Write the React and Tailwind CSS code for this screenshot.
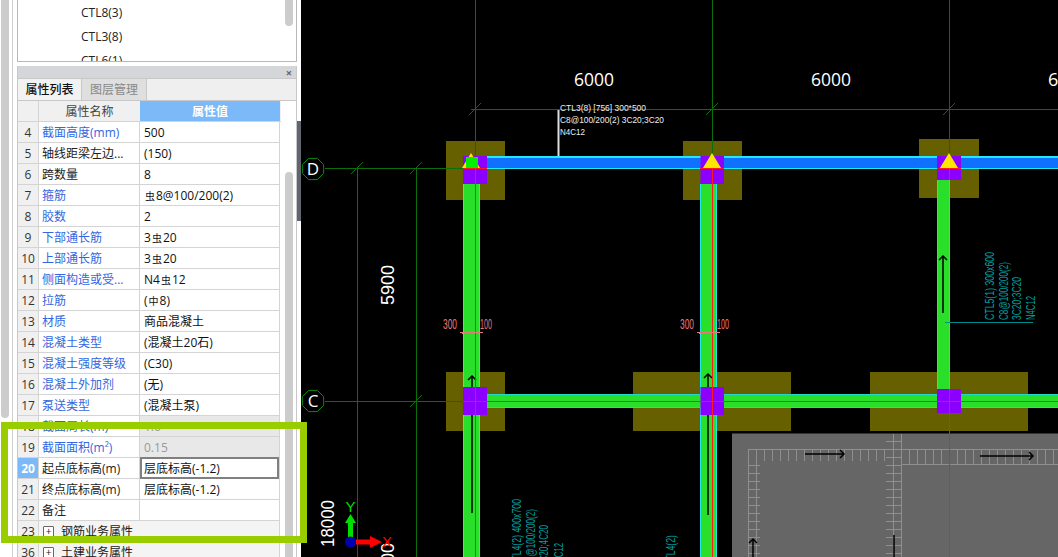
import React from "react";

const Bar = () => <span className="text-[10px] align-[3px] mx-px">虫</span>;
const Dia = () => <span className="text-[10px] align-[3px] mx-px">中</span>;

const rows = [
    { n: 4, name: "截面高度(mm)", blue: true, value: "500" },
    { n: 5, name: "轴线距梁左边...", value: "(150)" },
    { n: 6, name: "跨数量", value: "8" },
    { n: 7, name: "箍筋", blue: true, value: <><Bar />8@100/200(2)</> },
    { n: 8, name: "胶数", blue: true, value: "2" },
    { n: 9, name: "下部通长筋", blue: true, value: <>3<Bar />20</> },
    { n: 10, name: "上部通长筋", blue: true, value: <>3<Bar />20</> },
    { n: 11, name: "侧面构造或受...", blue: true, value: <>N4<Bar />12</> },
    { n: 12, name: "拉筋", blue: true, value: <>(<Dia />8)</> },
    { n: 13, name: "材质", blue: true, value: "商品混凝土" },
    { n: 14, name: "混凝土类型", blue: true, value: "(混凝土20石)" },
    { n: 15, name: "混凝土强度等级", blue: true, value: "(C30)" },
    { n: 16, name: "混凝土外加剂", blue: true, value: "(无)" },
    { n: 17, name: "泵送类型", blue: true, value: "(混凝土泵)" },
    { n: 18, name: "截面周长(m)", blue: true, value: "1.6", off: true },
    { n: 19, name: "截面面积(m²)", blue: true, value: "0.15", off: true },
    { n: 20, name: "起点底标高(m)", value: "层底标高(-1.2)", active: true },
    { n: 21, name: "终点底标高(m)", value: "层底标高(-1.2)" },
    { n: 22, name: "备注", value: "" },
    { n: 23, name: "钢筋业务属性", group: true },
    { n: 36, name: "土建业务属性", group: true },
];

function Row({ r }) {
    const numCls = r.active ? "bg-[#7cb9f8] text-white font-bold" : "bg-[#f0f0f0] text-[#333]";
    const rowBg = r.group ? "bg-[#f4f4f4]" : "bg-white";
    return (
        <div className={`flex w-[262px] h-[21px] shrink-0 border-b border-r border-[#d4d4d4] ${rowBg}`}>
            <div className={`w-[21px] shrink-0 border-r border-[#d4d4d4] flex items-center justify-center pt-[2px] ${numCls}`}>{r.n}</div>
            {r.group ? (
                <div className="flex items-center pl-1 pt-[2px] text-[#222]">
                    <span className="w-[11px] h-[11px] -mt-[2px] border border-[#666] rounded-[1px] flex items-center justify-center text-[10px] leading-none bg-white mr-[7px]">+</span>
                    {r.name}
                </div>
            ) : (
                <>
                    <div className={`w-[101px] shrink-0 border-r border-[#d4d4d4] pl-[3px] pt-[2px] flex items-center whitespace-nowrap overflow-hidden ${r.blue ? "text-[#3366e0]" : "text-[#222]"}`}>{r.name}</div>
                    <div className={`w-[139px] shrink-0 pt-[2px] flex items-center whitespace-nowrap ${r.off ? "bg-[#e8e8e8] text-[#999]" : "text-[#111]"} ${r.active ? "border-2 border-[#808080] -mt-px h-[22px] pl-[2px]" : "pl-1"}`}>{r.value}</div>
                </>
            )}
        </div>
    );
}

const GREEN_AXIS = "#0a6e0a";
const RED = "#ff1a1a";
const TEAL = "#00a0a0";
const PINK = "#e87878";

function Tick({ x, y }) {
    return <line x1={x - 6} y1={y + 6} x2={x + 6} y2={y - 6} stroke={GREEN_AXIS} strokeWidth="1" />;
}

function Bubble({ y, label }) {
    const pts = [];
    for (let i = 0; i < 8; i++) {
        const a = (Math.PI / 4) * i + Math.PI / 8;
        pts.push(`${313 + 11.5 * Math.cos(a)},${y + 11.5 * Math.sin(a)}`);
    }
    return (
        <g>
            <polygon points={pts.join(" ")} fill="none" stroke="#0a8a0a" strokeWidth="1" />
            <text x="313" y={y + 6} textAnchor="middle" fontSize="17" fill="#fff" fontFamily="Open Sans">{label}</text>
        </g>
    );
}

function UpArrow({ x, top, bottom }) {
    return (
        <g stroke="#000" strokeWidth="1.5" fill="none">
            <line x1={x} y1={top} x2={x} y2={bottom} />
            <polyline points={`${x - 4},${top + 4} ${x},${top} ${x + 4},${top + 4}`} />
        </g>
    );
}

function RightArrow({ x1, x2, y }) {
    return (
        <g stroke="#000" strokeWidth="1.5" fill="none">
            <line x1={x1} y1={y} x2={x2} y2={y} />
            <polyline points={`${x2 - 4},${y - 4} ${x2},${y} ${x2 - 4},${y + 4}`} />
        </g>
    );
}

function VText({ x, y, len, fill = TEAL, size = 13, children }) {
    return (
        <text transform={`translate(${x} ${y}) rotate(-90)`} fontSize={size} fill={fill} textLength={len} lengthAdjust="spacingAndGlyphs" fontFamily="Liberation Sans">
            {children}
        </text>
    );
}

function Slab() {
    const grid = [];
    const c = "#8f8f8f";
    for (let x = 748; x < 886; x += 8) grid.push(<line key={`a${x}`} x1={x + 0.5} y1="449" x2={x + 0.5} y2="461" stroke={c} />);
    for (let x = 901; x < 1058; x += 8) grid.push(<line key={`b${x}`} x1={x + 0.5} y1="449" x2={x + 0.5} y2="464" stroke={c} />);
    for (let y = 465; y < 557; y += 8) grid.push(<line key={`c${y}`} x1="748" y1={y + 0.5} x2="760" y2={y + 0.5} stroke={c} />);
    for (let y = 441; y < 557; y += 8) grid.push(<line key={`d${y}`} x1="886" y1={y + 0.5} x2="902" y2={y + 0.5} stroke={c} />);
    return (
        <g>
            <rect x="732" y="433" width="326" height="124" fill="#666666" />
            <line x1="732" y1="433.5" x2="1058" y2="433.5" stroke="#333" />
            <line x1="748" y1="449.5" x2="1058" y2="449.5" stroke={c} />
            <line x1="901" y1="464.5" x2="1058" y2="464.5" stroke={c} />
            <line x1="756.5" y1="461" x2="756.5" y2="557" stroke={c} />
            <line x1="748.5" y1="449" x2="748.5" y2="557" stroke={c} />
            <line x1="893.5" y1="434" x2="893.5" y2="557" stroke={c} />
            <line x1="901.5" y1="434" x2="901.5" y2="557" stroke={c} />
            {grid}
        </g>
    );
}

function Drawing() {
    const vBeam = (x, w, y1, y2, edge = "#20e8e8") => (
        <g>
            <rect x={x} y={y1} width={w} height={y2 - y1} fill="#2adf2a" />
            <line x1={x + 0.5} y1={y1} x2={x + 0.5} y2={y2} stroke={edge} />
            <line x1={x + w - 0.5} y1={y1} x2={x + w - 0.5} y2={y2} stroke={edge} />
        </g>
    );
    return (
        <svg viewBox="301 0 757 557" width="757" height="557" className="block">
            {/* footings */}
            <g fill="#666000">
                <rect x="446" y="141" width="59" height="59" />
                <rect x="683" y="141" width="59" height="59" />
                <rect x="919" y="139" width="60" height="59" />
                <rect x="446" y="372" width="59" height="59" />
                <rect x="633" y="372" width="158" height="59" />
                <rect x="870" y="372" width="158" height="59" />
            </g>

            <Slab />

            {/* axes */}
            <g stroke={GREEN_AXIS} strokeWidth="1">
                <line x1="325" y1="168.5" x2="470" y2="168.5" />
                <line x1="325" y1="401.5" x2="470" y2="401.5" />
                <line x1="357.5" y1="168" x2="357.5" y2="557" />
                <line x1="416.5" y1="168" x2="416.5" y2="557" />
                <line x1="471" y1="109.5" x2="1058" y2="109.5" />
                <line x1="475.5" y1="0" x2="475.5" y2="160" />
                <line x1="712.5" y1="0" x2="712.5" y2="160" />
                <line x1="949.5" y1="0" x2="949.5" y2="160" />
            </g>
            <Tick x={357} y={168} />
            <Tick x={416} y={168} />
            <Tick x={416} y={401} />
            <Tick x={475} y={109} />
            <Tick x={712} y={109} />
            <Tick x={949} y={109} />
            <Bubble y={169} label="D" />
            <Bubble y={401} label="C" />

            {/* beams */}
            {vBeam(463, 17, 184, 557)}
            {vBeam(700, 17, 184, 557)}
            {vBeam(937, 13, 180, 389, "#40d0c0")}

            <rect x="487" y="394" width="571" height="14" fill="#2adf2a" />
            <line x1="487" y1="394.5" x2="1058" y2="394.5" stroke="#20d8c8" />
            <line x1="487" y1="407.5" x2="1058" y2="407.5" stroke="#20d8c8" />

            <rect x="487" y="156" width="571" height="13" fill="#1070ff" />
            <line x1="478" y1="157" x2="1058" y2="157" stroke="#20e8ff" strokeWidth="2" />
            <line x1="478" y1="168.5" x2="1058" y2="168.5" stroke="#20e8ff" />

            <UpArrow x={472} top={376} bottom={513} />
            <UpArrow x={708} top={374} bottom={515} />
            <UpArrow x={943} top={256} bottom={313} />

            {/* columns */}
            <g fill="#8b00ff">
                <rect x="463" y="156" width="24" height="28" />
                <rect x="700.5" y="156" width="23.5" height="28" />
                <rect x="937" y="156" width="24" height="24" />
                <rect x="463" y="387" width="24" height="28" />
                <rect x="700.5" y="387" width="23.5" height="28" />
                <rect x="937" y="389" width="24" height="24" />
            </g>

            {/* red centre lines */}
            <g stroke={RED} strokeWidth="1">
                <line x1="475.5" y1="169" x2="475.5" y2="557" />
                <line x1="712.5" y1="169" x2="712.5" y2="557" />
                <line x1="949.5" y1="169" x2="949.5" y2="180" />
                <line x1="949.5" y1="389" x2="949.5" y2="557" />
                <line x1="463" y1="168.5" x2="487" y2="168.5" />
                <line x1="700" y1="168.5" x2="724" y2="168.5" />
                <line x1="937" y1="168.5" x2="961" y2="168.5" />
                <line x1="463" y1="401.5" x2="1058" y2="401.5" />
            </g>

            <polygon points="471,153 480,168 462,168" fill="#ffe600" />
            <rect x="466" y="157" width="12" height="11" fill="#00f000" />
            <polygon points="712,153 721,168 703,168" fill="#ffe600" />
            <polygon points="949,153 958,168 940,168" fill="#ffe600" />

            <RightArrow x1={805} x2={844} y={454} />
            <RightArrow x1={980} x2={1033} y={456} />
            <UpArrow x={753} top={539} bottom={557} />
            <line x1="894" y1="535" x2="894" y2="557" stroke="#000" strokeWidth="1.5" />

            {/* dimensions */}
            <g fill="#fff" fontFamily="Open Sans" fontSize="18">
                <text x="574" y="86" textLength="40" lengthAdjust="spacingAndGlyphs">6000</text>
                <text x="811" y="86" textLength="40" lengthAdjust="spacingAndGlyphs">6000</text>
                <text x="1048" y="86">6</text>
            </g>
            <VText x={394} y={305} len={40} fill="#fff" size={18}>5900</VText>
            <VText x={334} y={547} len={47} fill="#fff" size={18}>18000</VText>
            <VText x={394} y={583} len={40} fill="#fff" size={18}>6000</VText>

            {/* white beam label */}
            <line x1="558.5" y1="110" x2="558.5" y2="156" stroke="#ddd" strokeWidth="2" />
            <g fill="#eee" fontSize="9" fontFamily="Liberation Sans">
                <text x="560" y="111" textLength="86" lengthAdjust="spacingAndGlyphs">CTL3(8) [756] 300*500</text>
                <text x="560" y="123" textLength="104" lengthAdjust="spacingAndGlyphs">C8@100/200(2) 3C20;3C20</text>
                <text x="560" y="135" textLength="25" lengthAdjust="spacingAndGlyphs">N4C12</text>
            </g>

            {/* teal labels */}
            <line x1="945" y1="322.5" x2="1033" y2="322.5" stroke="#008b8b" />
            <VText x={994} y={320} len={68}>CTL5(1) 300x600</VText>
            <VText x={1008} y={320} len={58}>C8@100/200(2)</VText>
            <VText x={1021} y={320} len={43}>3C20;3C20</VText>
            <VText x={1035} y={320} len={24}>N4C12</VText>

            <VText x={521} y={567} len={68}>CTL4(2) 400x700</VText>
            <VText x={535} y={567} len={58}>C8@100/200(2)</VText>
            <VText x={548} y={566} len={41}>3C20;4C20</VText>
            <VText x={563} y={567} len={24}>N4C12</VText>
            <VText x={675} y={567} len={32}>CTL4(2)</VText>

            {/* pink 300/100 */}
            <g fill={PINK} fontSize="14" fontFamily="Liberation Sans">
                <text x="443" y="329" textLength="14" lengthAdjust="spacingAndGlyphs">300</text>
                <text x="480" y="329" textLength="12" lengthAdjust="spacingAndGlyphs">100</text>
                <text x="680" y="329" textLength="14" lengthAdjust="spacingAndGlyphs">300</text>
                <text x="717" y="329" textLength="12" lengthAdjust="spacingAndGlyphs">100</text>
            </g>
            <g stroke={PINK} strokeWidth="1">
                <line x1="460" y1="332.5" x2="483" y2="332.5" />
                <line x1="697" y1="332.5" x2="720" y2="332.5" />
                <line x1="462" y1="334" x2="465" y2="331" />
                <line x1="474" y1="334" x2="477" y2="331" />
                <line x1="699" y1="334" x2="702" y2="331" />
                <line x1="711" y1="334" x2="714" y2="331" />
            </g>

            {/* UCS gizmo */}
            <polygon points="348,538 348,523 345,523 350.5,514 356,523 353,523 353,538" fill="#00e000" />
            <polygon points="356,539.5 370,539.5 370,536 382,542 370,548 370,544.5 356,544.5" fill="#ff0000" />
            <circle cx="350.5" cy="542" r="5.5" fill="#0000b0" />
            <text x="350.5" y="512" textAnchor="middle" fontSize="15" fill="#00e000" fontFamily="Liberation Sans">Y</text>
            <text x="387" y="547" textAnchor="middle" fontSize="15" fill="#ff0000" fontFamily="Liberation Sans">X</text>
        </svg>
    );
}

export default function App() {
    return (
        <div className="relative flex w-[1058px] h-[557px] overflow-hidden bg-white text-[12px] leading-none font-['Open_Sans','Noto_Sans_CJK_SC',sans-serif]">
            {/* outer scrollbar */}
            <div className="w-[9px] shrink-0 pl-px">
                <div className="w-2 h-[418px] bg-[#cccccc] rounded-b-[4px]" />
            </div>

            {/* side panels */}
            <div className="w-[288px] shrink-0 pl-[3px] flex">
                <div className="w-px bg-[#cfcfcf] shrink-0" />
                <div className="flex-1 pl-1 flex flex-col">
                    {/* floor tree */}
                    <div className="h-[62px] shrink-0 border border-t-0 border-[#b8b8b8] flex overflow-hidden">
                        <div className="flex-1 pl-[63px] pt-px text-[#222] overflow-hidden">
                            <div className="h-6 shrink-0 flex items-center">CTL8(3)</div>
                            <div className="h-6 shrink-0 flex items-center">CTL3(8)</div>
                            <div className="h-6 shrink-0 flex items-center">CTL6(1)</div>
                        </div>
                        <div className="w-[11px] shrink-0">
                            <div className="w-2 h-[26px] bg-[#cccccc] rounded-b-[4px]" />
                        </div>
                    </div>

                    {/* properties panel */}
                    <div className="mt-1 flex-1 min-h-0 border-x border-[#c8c8c8] flex flex-col">
                        <div className="h-3 shrink-0 bg-[#d4d6da] flex items-center justify-end pr-[4px] text-[#666]">
                            <span className="text-[11px] font-bold leading-none">×</span>
                        </div>
                        <div className="h-[23px] shrink-0 flex border-y border-[#c8c8c8] bg-[#efefef]">
                            <div className="w-[64px] bg-[#f2f2f2] border-r border-[#c8c8c8] flex items-center justify-center font-medium text-[#111]">属性列表</div>
                            <div className="w-[65px] bg-[#dfdfdf] border-r border-[#c8c8c8] flex items-center justify-center text-[#888]">图层管理</div>
                        </div>
                        <div className="flex-1 min-h-0 flex overflow-hidden">
                            <div className="w-[263px] shrink-0 flex flex-col">
                                <div className="flex h-[21px] shrink-0 border-b border-[#d4d4d4] bg-[#f0f0f0]">
                                    <div className="w-[21px] shrink-0 border-r border-[#d4d4d4]" />
                                    <div className="w-[101px] shrink-0 pt-[2px] flex items-center justify-center text-[#444]">属性名称</div>
                                    <div className="w-[140px] shrink-0 pt-[2px] bg-[#7cb9f8] text-white font-bold flex items-center justify-center">属性值</div>
                                </div>
                                {rows.map((r) => <Row key={r.n} r={r} />)}
                            </div>
                            <div className="flex-1 pl-[4px] pt-[71px]">
                                <div className="w-2 h-[400px] bg-[#cccccc] rounded-t-[4px]" />
                            </div>
                        </div>
                    </div>
                </div>
            </div>

            {/* splitter */}
            <div className="w-1 shrink-0 pt-[121px]">
                <div className="h-[100px] bg-[#5f6670]" />
            </div>

            {/* drawing */}
            <div className="flex-1 bg-black overflow-hidden">
                <Drawing />
            </div>

            {/* callout */}
            <div className="absolute left-px top-[422px] w-[306px] h-[121px] border-[7px] border-[#9acd00]" />
        </div>
    );
}
